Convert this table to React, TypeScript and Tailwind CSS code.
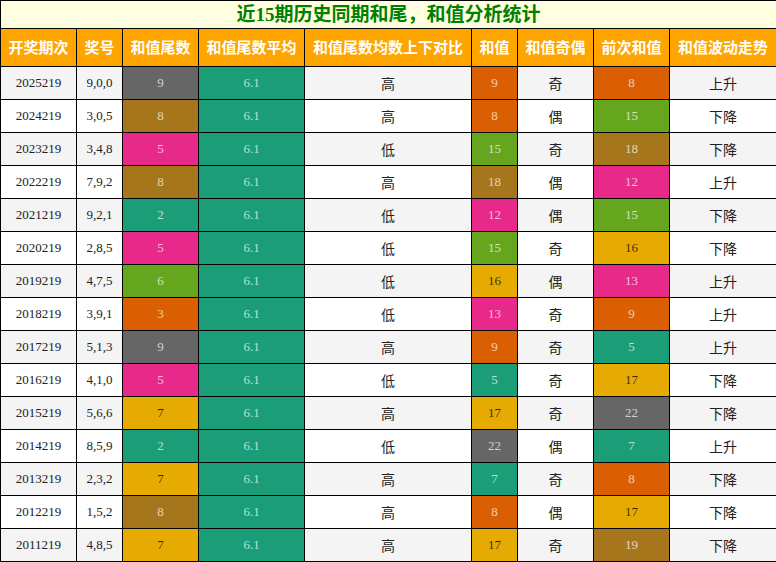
import React from 'react';

const C = {
  gray: '#666666',
  brown: '#a6761d',
  pink: '#e7298a',
  green: '#1b9e77',
  lime: '#66a61e',
  orange: '#d95f02',
  yellow: '#e6ab02',
};

type Row = [string, string, number, string, number, string, number, string];

const rows: Row[] = [
  ['2025219', '9,0,0', 9, '高', 9, '奇', 8, '上升'],
  ['2024219', '3,0,5', 8, '高', 8, '偶', 15, '下降'],
  ['2023219', '3,4,8', 5, '低', 15, '奇', 18, '下降'],
  ['2022219', '7,9,2', 8, '高', 18, '偶', 12, '上升'],
  ['2021219', '9,2,1', 2, '低', 12, '偶', 15, '下降'],
  ['2020219', '2,8,5', 5, '低', 15, '奇', 16, '下降'],
  ['2019219', '4,7,5', 6, '低', 16, '偶', 13, '上升'],
  ['2018219', '3,9,1', 3, '低', 13, '奇', 9, '上升'],
  ['2017219', '5,1,3', 9, '高', 9, '奇', 5, '上升'],
  ['2016219', '4,1,0', 5, '低', 5, '奇', 17, '下降'],
  ['2015219', '5,6,6', 7, '高', 17, '奇', 22, '下降'],
  ['2014219', '8,5,9', 2, '低', 22, '偶', 7, '上升'],
  ['2013219', '2,3,2', 7, '高', 7, '奇', 8, '下降'],
  ['2012219', '1,5,2', 8, '高', 8, '偶', 17, '下降'],
  ['2011219', '4,8,5', 7, '高', 17, '奇', 19, '下降'],
];

const tailColor: Record<number, string> = {
  2: C.green, 3: C.orange, 5: C.pink, 6: C.lime, 7: C.yellow, 8: C.brown, 9: C.gray,
};

const sumColor: Record<number, string> = {
  5: C.green, 7: C.green, 8: C.orange, 9: C.orange, 12: C.pink, 13: C.pink,
  15: C.lime, 16: C.yellow, 17: C.yellow, 18: C.brown, 19: C.brown, 22: C.gray,
};

const headers = ['开奖期次', '奖号', '和值尾数', '和值尾数平均', '和值尾数均数上下对比', '和值', '和值奇偶', '前次和值', '和值波动走势'];
const widths = [76, 46, 76, 106, 167, 46, 76, 76, 107];

const ColorCell = ({ value, color }: { value: string | number; color: string }) => (
  <td
    className={`border border-black text-center text-[13px] ${color === C.yellow ? 'text-black/75' : 'text-white/70'}`}
    style={{ backgroundColor: color }}
  >
    {value}
  </td>
);

export default function App() {
  return (
    <div className="w-[776px] bg-white" style={{ fontFamily: '"Liberation Serif", "Noto Sans CJK SC", serif' }}>
      <table className="w-[776px] table-fixed border-collapse">
        <colgroup>
          {widths.map((w, i) => (
            <col key={i} style={{ width: w }} />
          ))}
        </colgroup>
        <thead>
          <tr className="h-[28px]">
            <th colSpan={9} className="border border-black bg-[#ffffe0] text-[19px] font-bold leading-none text-[#008000]">
              近15期历史同期和尾，和值分析统计
            </th>
          </tr>
          <tr className="h-[38px]">
            {headers.map((h) => (
              <th key={h} className="border border-black bg-[#ffa500] pt-[2px] text-[15px] font-bold text-white whitespace-nowrap">
                {h}
              </th>
            ))}
          </tr>
        </thead>
        <tbody>
          {rows.map((r, i) => (
            <tr key={r[0]} className={`h-[33px] ${i % 2 === 0 ? 'bg-[#f4f4f4]' : 'bg-white'}`}>
              <td className="border border-black text-center text-[13px] text-[#222]">{r[0]}</td>
              <td className="border border-black text-center text-[13px] text-[#222]">{r[1]}</td>
              <ColorCell value={r[2]} color={tailColor[r[2]]} />
              <ColorCell value="6.1" color={C.green} />
              <td className="border border-black pt-[3px] text-center text-[14px] text-[#222]">{r[3]}</td>
              <ColorCell value={r[4]} color={sumColor[r[4]]} />
              <td className="border border-black pt-[3px] text-center text-[14px] text-[#222]">{r[5]}</td>
              <ColorCell value={r[6]} color={sumColor[r[6]]} />
              <td className="border border-black pt-[3px] text-center text-[14px] text-[#222]">{r[7]}</td>
            </tr>
          ))}
        </tbody>
      </table>
    </div>
  );
}
